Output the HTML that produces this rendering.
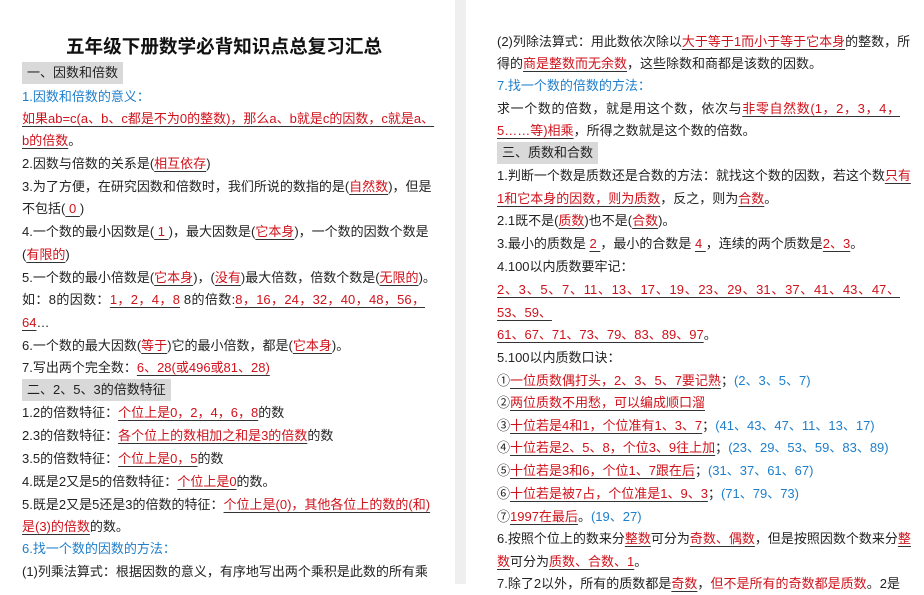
<!DOCTYPE html>
<html><head><meta charset="utf-8"><style>
*{margin:0;padding:0;box-sizing:border-box}
body{width:924px;height:584px;overflow:hidden;background:#fff;font-family:"Liberation Sans","Noto Sans CJK SC",sans-serif;font-size:13px;color:#222;position:relative}
.gap{position:absolute;left:455px;top:0;width:11px;height:584px;background:#efefef}
.l,.h{position:absolute;white-space:nowrap;height:22px;line-height:22px}
.L{left:22px}.R{left:497px}
.j{width:403px;text-align:justify;text-align-last:justify}
.u{color:#d0121b;text-decoration:underline;text-decoration-color:#333;text-underline-offset:3px}
.r{color:#d0121b}
.b{color:#1f7fcb}
.h{background:#d9d9d9;padding:0 5px;font-size:13px}
.t{position:absolute;left:0;width:448px;text-align:center;top:33px;font-size:18.6px;line-height:28px;color:#111;font-weight:bold}
</style></head><body>
<div class="gap"></div>
<div class="t">五年级下册数学必背知识点总复习汇总</div>
<div class="h L" style="top:62px">一、因数和倍数</div>
<div class="l L b" style="top:86px">1.因数和倍数的意义：</div>
<div class="l L j" style="top:108px"><span class="u">如果ab=c(a、b、c都是不为0的整数)，那么a、b就是c的因数，c就是a、</span></div>
<div class="l L" style="top:130px"><span class="u">b的倍数</span>。</div>
<div class="l L" style="top:153px">2.因数与倍数的关系是(<span class="u">相互依存</span>)</div>
<div class="l L j" style="top:176px">3.为了方便，在研究因数和倍数时，我们所说的数指的是(<span class="u">自然数</span>)，但是</div>
<div class="l L" style="top:198px">不包括(<span class="u"> 0 </span>)</div>
<div class="l L j" style="top:221px">4.一个数的最小因数是(<span class="u"> 1 </span>)，最大因数是(<span class="u">它本身</span>)，一个数的因数个数是</div>
<div class="l L" style="top:244px">(<span class="u">有限的</span>)</div>
<div class="l L" style="top:267px">5.一个数的最小倍数是(<span class="u">它本身</span>)，(<span class="u">没有</span>)最大倍数，倍数个数是(<span class="u">无限的</span>)。</div>
<div class="l L j" style="top:289px">如：8的因数：<span class="u">1，2，4，8</span> 8的倍数:<span class="u">8，16，24，32，40，48，56，</span></div>
<div class="l L" style="top:312px"><span class="u">64</span>…</div>
<div class="l L" style="top:335px">6.一个数的最大因数(<span class="u">等于</span>)它的最小倍数，都是(<span class="u">它本身</span>)。</div>
<div class="l L" style="top:357px">7.写出两个完全数：<span class="u">6、28(或496或81、28)</span></div>
<div class="h L" style="top:379px">二、2、5、3的倍数特征</div>
<div class="l L" style="top:402px">1.2的倍数特征：<span class="u">个位上是0，2，4，6，8</span>的数</div>
<div class="l L" style="top:425px">2.3的倍数特征：<span class="u">各个位上的数相加之和是3的倍数</span>的数</div>
<div class="l L" style="top:448px">3.5的倍数特征：<span class="u">个位上是0，5</span>的数</div>
<div class="l L" style="top:471px">4.既是2又是5的倍数特征：<span class="u">个位上是0</span>的数。</div>
<div class="l L j" style="top:494px">5.既是2又是5还是3的倍数的特征：<span class="u">个位上是(0)，其他各位上的数的(和)</span></div>
<div class="l L" style="top:516px"><span class="u">是(3)的倍数</span>的数。</div>
<div class="l L b" style="top:538px">6.找一个数的因数的方法：</div>
<div class="l L j" style="top:561px">(1)列乘法算式：根据因数的意义，有序地写出两个乘积是此数的所有乘</div>

<div class="l R j" style="top:31px">(2)列除法算式：用此数依次除以<span class="u">大于等于1而小于等于它本身</span>的整数，所</div>
<div class="l R" style="top:53px">得的<span class="u">商是整数而无余数</span>，这些除数和商都是该数的因数。</div>
<div class="l R b" style="top:75px">7.找一个数的倍数的方法：</div>
<div class="l R j" style="top:98px">求一个数的倍数，就是用这个数，依次与<span class="u">非零自然数(1，2，3，4，</span></div>
<div class="l R" style="top:120px"><span class="u">5……等)相乘</span>，所得之数就是这个数的倍数。</div>
<div class="h R" style="top:142px">三、质数和合数</div>
<div class="l R j" style="top:165px">1.判断一个数是质数还是合数的方法：就找这个数的因数，若这个数<span class="u">只有</span></div>
<div class="l R" style="top:188px"><span class="u">1和它本身的因数，则为质数</span>，反之，则为<span class="u">合数</span>。</div>
<div class="l R" style="top:210px">2.1既不是(<span class="u">质数</span>)也不是(<span class="u">合数</span>)。</div>
<div class="l R" style="top:233px">3.最小的质数是 <span class="u"> 2 </span>，最小的合数是 <span class="u"> 4 </span>，连续的两个质数是<span class="u">2、3</span>。</div>
<div class="l R" style="top:256px">4.100以内质数要牢记：</div>
<div class="l R j" style="top:279px"><span class="u">2、3、5、7、11、13、17、19、23、29、31、37、41、43、47、</span></div>
<div class="l R" style="top:302px"><span class="u">53、59、</span></div>
<div class="l R" style="top:324px"><span class="u">61、67、71、73、79、83、89、97</span>。</div>
<div class="l R" style="top:347px">5.100以内质数口诀：</div>
<div class="l R" style="top:370px">①<span class="u">一位质数偶打头，2、3、5、7要记熟</span>；<span class="b">(2、3、5、7)</span></div>
<div class="l R" style="top:392px">②<span class="u">两位质数不用愁，可以编成顺口溜</span></div>
<div class="l R" style="top:415px">③<span class="u">十位若是4和1，个位准有1、3、7</span>；<span class="b">(41、43、47、11、13、17)</span></div>
<div class="l R" style="top:437px">④<span class="u">十位若是2、5、8，个位3、9往上加</span>；<span class="b">(23、29、53、59、83、89)</span></div>
<div class="l R" style="top:460px">⑤<span class="u">十位若是3和6，个位1、7跟在后</span>；<span class="b">(31、37、61、67)</span></div>
<div class="l R" style="top:483px">⑥<span class="u">十位若是被7占，个位准是1、9、3</span>；<span class="b">(71、79、73)</span></div>
<div class="l R" style="top:506px">⑦<span class="u">1997在最后</span>。<span class="b">(19、27)</span></div>
<div class="l R j" style="top:528px">6.按照个位上的数来分<span class="u">整数</span>可分为<span class="u">奇数、偶数</span>，但是按照因数个数来分<span class="u">整</span></div>
<div class="l R" style="top:551px"><span class="u">数</span>可分为<span class="u">质数、合数、1</span>。</div>
<div class="l R j" style="top:573px">7.除了2以外，所有的质数都是<span class="u">奇数</span>，<span class="r">但不是所有的奇数都是质数</span>。2是</div>
</body></html>
